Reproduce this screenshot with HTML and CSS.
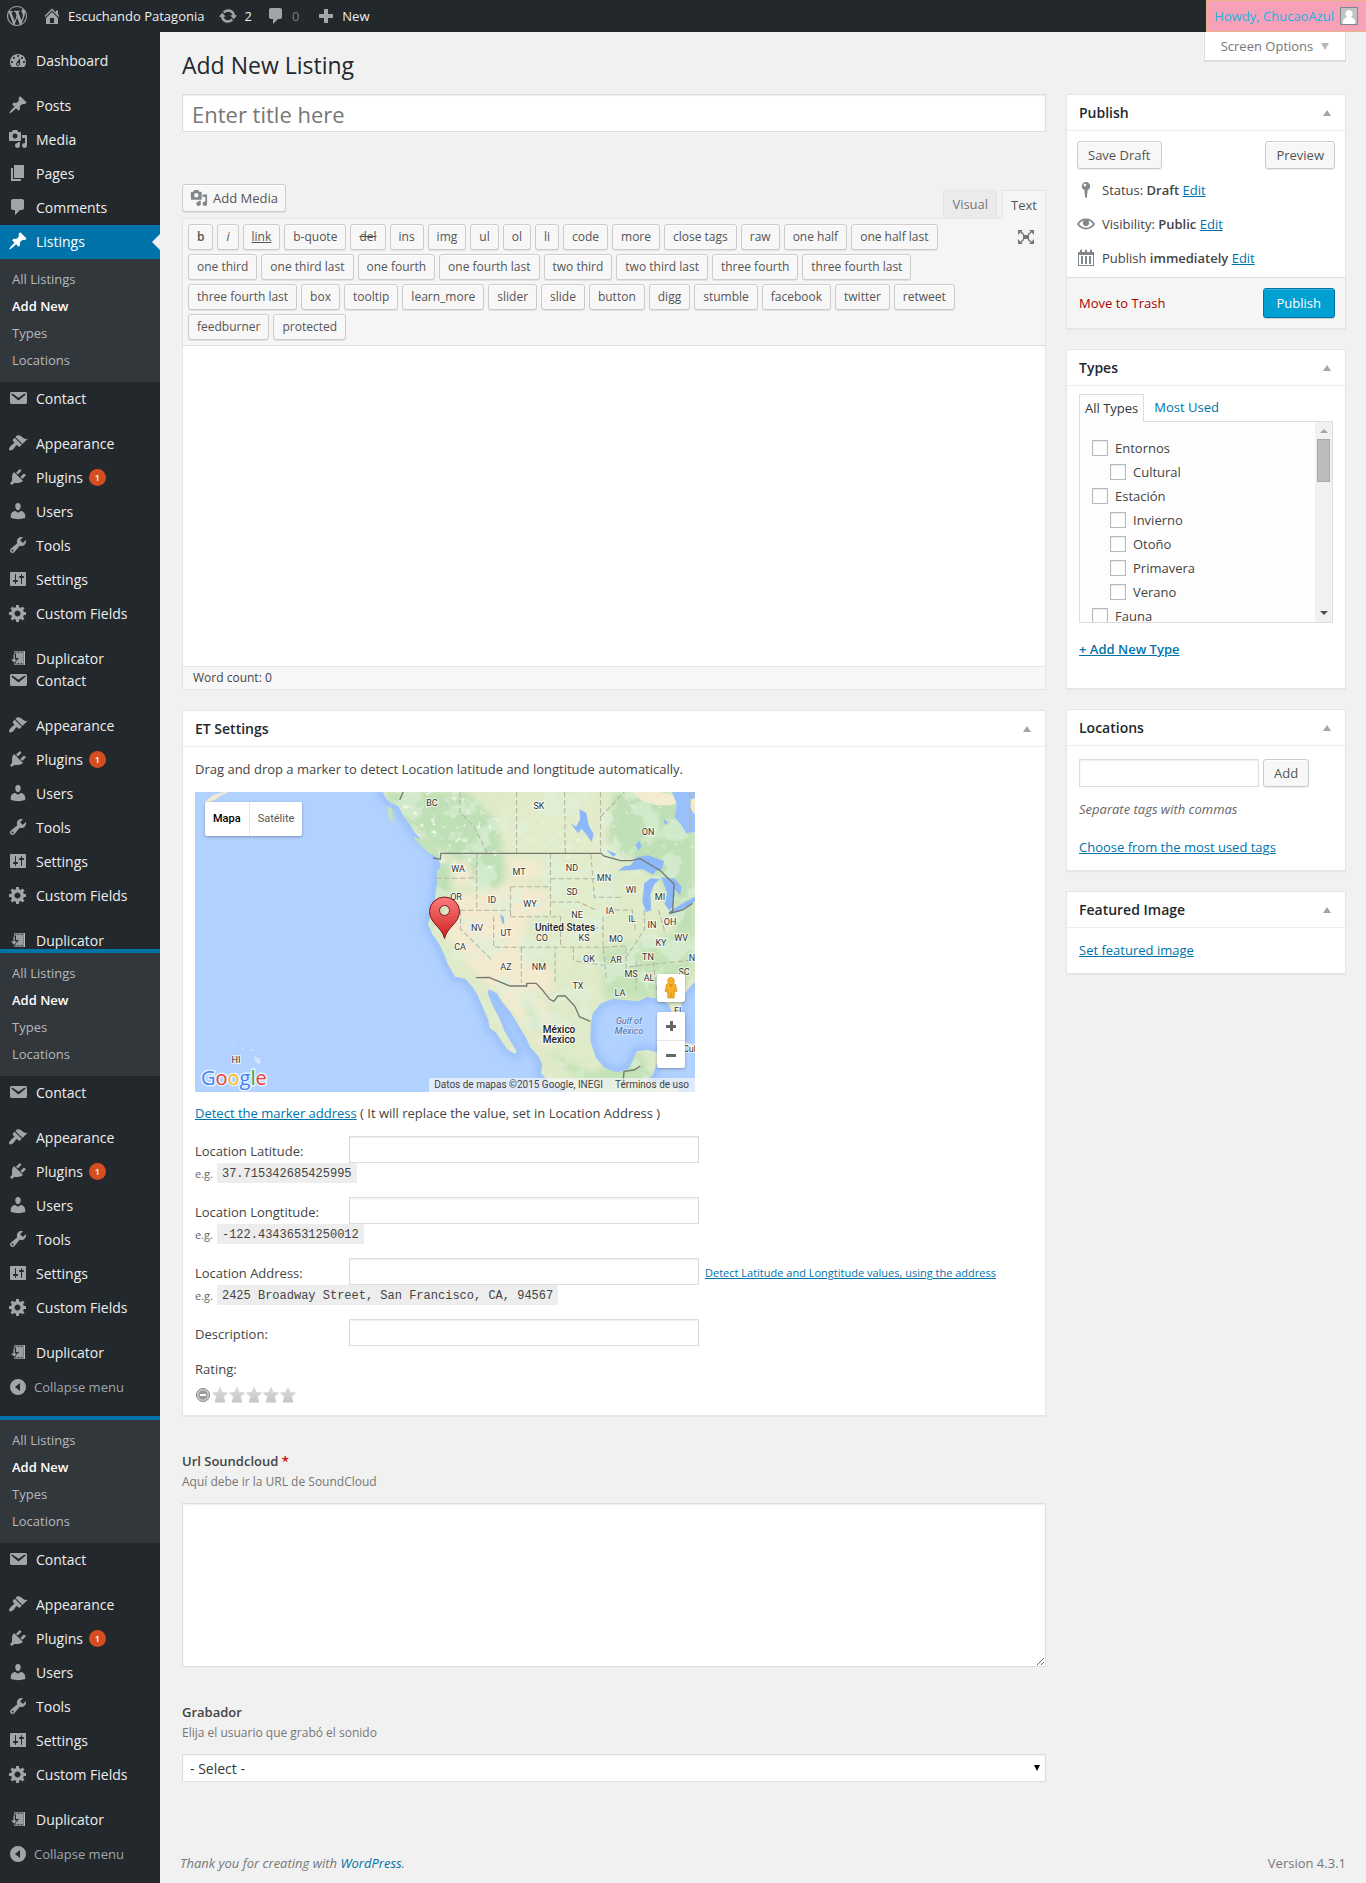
FILE: index.html
```html
<!DOCTYPE html>
<html lang="es">
<head>
<meta charset="utf-8">
<meta name="viewport" content="width=device-width, initial-scale=1">
<title>Add New Listing</title>
<link rel="stylesheet" href="styles.css">
</head>
<body>
<svg class="sprite" width="0" height="0" aria-hidden="true">
<symbol id="i-wp" viewBox="0 0 20 20"><path d="M20 10c0-5.51-4.49-10-10-10C4.48 0 0 4.49 0 10c0 5.52 4.48 10 10 10 5.51 0 10-4.48 10-10zM7.78 15.37L4.37 6.22c.55-.02 1.17-.08 1.17-.08.5-.06.44-1.13-.06-1.11 0 0-1.45.11-2.37.11-.18 0-.37 0-.58-.01C4.12 2.69 6.87 1.11 10 1.11c2.33 0 4.45.87 6.05 2.34-.68-.11-1.65.39-1.65 1.58 0 .74.45 1.36.9 2.1.35.61.55 1.36.55 2.46 0 1.49-1.4 5-1.4 5l-3.03-8.37c.54-.02.82-.17.82-.17.5-.05.44-1.25-.06-1.22 0 0-1.44.12-2.38.12-.87 0-2.33-.12-2.33-.12-.5-.03-.56 1.2-.06 1.22l.92.08 1.26 3.41zM17.41 10c.24-.64.74-1.87.43-4.25.7 1.29 1.05 2.71 1.05 4.25 0 3.29-1.73 6.24-4.4 7.78.97-2.59 1.94-5.2 2.92-7.78zM6.1 18.09C3.12 16.65 1.11 13.53 1.11 10c0-1.3.23-2.48.72-3.59C3.25 10.3 4.67 14.2 6.1 18.09zm4.03-6.63l2.58 6.98c-.86.29-1.76.45-2.71.45-.79 0-1.57-.11-2.29-.33.81-2.38 1.62-4.74 2.42-7.1z"/></symbol>
<symbol id="i-home" viewBox="0 0 20 20"><path d="M16 8.5l1.53 1.53-1.06 1.06L10 4.6l-6.47 6.49-1.06-1.06L10 2.5l4 4v-2h2v4zm-6-2.46l6 5.99V18H4v-5.97zM12 17v-5H8v5h4z"/></symbol>
<symbol id="i-update" viewBox="0 0 20 20"><path d="M10.2 3.28c3.53 0 6.43 2.61 6.92 6h2.08l-3.5 4-3.5-4h2.32c-.45-1.97-2.21-3.45-4.32-3.45-1.45 0-2.73.71-3.54 1.78L4.95 5.66C6.23 4.2 8.11 3.28 10.2 3.28zm-.4 13.44c-3.52 0-6.43-2.61-6.92-6H.8l3.5-4c1.17 1.33 2.33 2.67 3.5 4H5.48c.45 1.97 2.21 3.45 4.32 3.45 1.45 0 2.73-.71 3.54-1.78l1.71 1.95c-1.28 1.46-3.15 2.38-5.25 2.38z"/></symbol>
<symbol id="i-plus" viewBox="0 0 20 20"><path d="M8 3h4v5h5v4h-5v5H8v-5H3V8h5z"/></symbol>
<symbol id="i-dash" viewBox="0 0 20 20"><path fill-rule="evenodd" d="M3.76 17h12.48c1.1-1.37 1.76-3.11 1.76-5 0-4.42-3.58-8-8-8s-8 3.58-8 8c0 1.89.66 3.63 1.76 5zM10 5c.55 0 1 .45 1 1s-.45 1-1 1-1-.45-1-1 .45-1 1-1zM6 7c.55 0 1 .45 1 1s-.45 1-1 1-1-.45-1-1 .45-1 1-1zm8 0c.55 0 1 .45 1 1s-.45 1-1 1-1-.45-1-1 .45-1 1-1zm-5.37 5.55L12 8v6c0 1.1-.9 2-2 2s-2-.9-2-2c0-.57.24-1.08.63-1.45zM4 11c.55 0 1 .45 1 1s-.45 1-1 1-1-.45-1-1 .45-1 1-1zm12 0c.55 0 1 .45 1 1s-.45 1-1 1-1-.45-1-1 .45-1 1-1zm-5 3c0-.55-.45-1-1-1s-1 .45-1 1 .45 1 1 1 1-.45 1-1z"/></symbol>
<symbol id="i-pin" viewBox="0 0 20 20"><path d="M10.44 3.02l1.82-1.82 6.36 6.35-1.83 1.82c-1.05-.68-2.48-.57-3.41.36l-.75.75c-.92.93-1.04 2.35-.35 3.41l-1.83 1.82-2.41-2.41-2.8 2.79c-.42.42-3.38 2.71-3.8 2.29s1.86-3.39 2.28-3.81l2.79-2.79L4.1 9.36l1.83-1.82c1.05.69 2.48.57 3.4-.36l.75-.75c.93-.92 1.05-2.35.36-3.41z"/></symbol>
<symbol id="i-media" viewBox="0 0 20 20"><path fill-rule="evenodd" d="M13 11V4c0-.55-.45-1-1-1h-1.67L9 1H5L3.67 3H2c-.55 0-1 .45-1 1v7c0 .55.45 1 1 1h10c.55 0 1-.45 1-1zM7 4.5c1.38 0 2.5 1.12 2.5 2.5S8.38 9.5 7 9.5 4.5 8.38 4.5 7 5.62 4.5 7 4.5zM14 6h5v10.5c0 1.38-1.12 2.5-2.5 2.5S14 17.88 14 16.5s1.12-2.5 2.5-2.5c.17 0 .34.02.5.05V9h-3V6zm-4 8.05V13h2v3.5c0 1.38-1.12 2.5-2.5 2.5S7 17.88 7 16.5 8.12 14 9.5 14c.17 0 .34.02.5.05z"/></symbol>
<symbol id="i-page" viewBox="0 0 20 20"><path d="M6 15V2h10v13H6zm-1 1h8v2H3V5h2v11z"/></symbol>
<symbol id="i-comment" viewBox="0 0 20 20"><path d="M5 2h9c1.1 0 2 .9 2 2v7c0 1.1-.9 2-2 2h-2l-5 5v-5H5c-1.1 0-2-.9-2-2V4c0-1.1.9-2 2-2z"/></symbol>
<symbol id="i-mail" viewBox="0 0 20 20"><path fill-rule="evenodd" d="M3.87 4h13.25C18.37 4 19 4.59 19 5.79v8.42c0 1.19-.63 1.79-1.88 1.79H3.87c-1.25 0-1.88-.6-1.88-1.79V5.79c0-1.2.63-1.79 1.88-1.79zm6.62 8.6l6.74-5.53c.24-.2.43-.66.13-1.07-.29-.41-.82-.42-1.17-.17l-5.7 3.86L4.8 5.83c-.35-.25-.88-.24-1.17.17-.3.41-.11.87.13 1.07z"/></symbol>
<symbol id="i-brush" viewBox="0 0 20 20"><path d="M14.48 11.06L7.41 3.99l1.5-1.5c.5-.56 2.3-.47 3.51.32 1.21.8 1.43 1.28 2.91 2.1 1.18.64 2.45 1.26 4.45.85zm-.71.71L6.7 4.7 4.93 6.47c-.39.39-.39 1.02 0 1.41l1.06 1.06c.39.39.39 1.03 0 1.42-.6.6-1.43 1.11-2.21 1.69-.35.26-.7.53-1.01.84C1.43 14.23.4 16.08 1.4 17.07c.99 1 2.84-.03 4.18-1.36.31-.31.58-.66.85-1.02.57-.78 1.08-1.61 1.69-2.21.39-.39 1.02-.39 1.41 0l1.06 1.06c.39.39 1.02.39 1.41 0z"/></symbol>
<symbol id="i-plug" viewBox="0 0 20 20"><path d="M13.11 4.36L9.87 7.6 8 5.73l3.24-3.24c.35-.34 1.05-.2 1.56.32.52.51.66 1.21.31 1.55zm-8 1.77l.91-1.12 9.01 9.01-1.19.84c-.71.71-2.63 1.16-3.82 1.16H6.14L4.9 17.26c-.59.59-1.54.59-2.12 0-.59-.58-.59-1.53 0-2.12l1.24-1.24v-3.88c0-1.13.4-3.19 1.09-3.89zm7.26 3.97l3.24-3.24c.34-.35 1.04-.21 1.55.31.52.51.66 1.21.31 1.55l-3.24 3.25z"/></symbol>
<symbol id="i-user" viewBox="0 0 20 20"><path d="M10 9.25c-2.27 0-2.73-3.44-2.73-3.44C7 4.02 7.82 2 9.97 2c2.16 0 2.98 2.02 2.71 3.81 0 0-.41 3.44-2.68 3.44zm0 2.57L12.72 10c2.39 0 4.52 2.33 4.52 4.53v2.49s-3.65 1.13-7.24 1.13c-3.65 0-7.24-1.13-7.24-1.13v-2.49c0-2.25 1.94-4.48 4.47-4.48z"/></symbol>
<symbol id="i-tool" viewBox="0 0 20 20"><path fill-rule="evenodd" d="M16.68 9.77c-1.34 1.34-3.3 1.67-4.95.99l-5.41 6.52c-.99.99-2.59.99-3.58 0s-.99-2.59 0-3.57l6.52-5.42c-.68-1.65-.35-3.61.99-4.95 1.28-1.28 3.12-1.62 4.72-1.06l-2.89 2.89 2.82 2.82 2.86-2.87c.53 1.58.18 3.39-1.08 4.65zM3.81 16.21c.4.39 1.04.39 1.43 0 .4-.4.4-1.04 0-1.43-.39-.4-1.03-.4-1.43 0-.39.39-.39 1.03 0 1.43z"/></symbol>
<symbol id="i-set" viewBox="0 0 20 20"><path fill-rule="evenodd" d="M18 16V4c0-.55-.45-1-1-1H3c-.55 0-1 .45-1 1v12c0 .55.45 1 1 1h14c.55 0 1-.45 1-1zM8 11h1c.55 0 1 .45 1 1s-.45 1-1 1H8v1.500c0 .28-.22.5-.5.5s-.5-.22-.5-.5V13H6c-.55 0-1-.45-1-1s.45-1 1-1h1V5.500c0-.28.22-.5.5-.5s.5.22.5.5V11zm5-2h-1c-.55 0-1-.45-1-1s.45-1 1-1h1V5.500c0-.28.22-.5.5-.5s.5.22.5.5V7h1c.55 0 1 .45 1 1s-.45 1-1 1h-1v5.500c0 .28-.22.5-.5.5s-.5-.22-.5-.5V9z"/></symbol>
<symbol id="i-gear" viewBox="0 0 20 20"><path fill-rule="evenodd" d="M18 12h-2.180c-.17.7-.44 1.350-.81 1.930l1.540 1.540-2.100 2.100-1.540-1.540c-.58.36-1.230.63-1.910.79V19H8v-2.180c-.68-.16-1.330-.43-1.910-.79l-1.540 1.540-2.120-2.120 1.540-1.540c-.36-.58-.63-1.230-.79-1.910H1V9.030h2.170c.16-.7.44-1.350.8-1.940L2.430 5.550l2.100-2.100 1.540 1.540c.58-.37 1.240-.64 1.930-.81V2h3v2.180c.68.16 1.330.43 1.910.79l1.540-1.540 2.120 2.120-1.540 1.540c.36.59.64 1.240.8 1.940H18V12zm-8.500 1.500c1.660 0 3-1.340 3-3s-1.340-3-3-3-3 1.340-3 3 1.340 3 3 3z"/></symbol>
<symbol id="i-dup" viewBox="0 0 20 20"><path fill="#7d7f81" d="M6 3h11v14H6z"/><path fill="#9a9c9e" d="M8 5h7v10H8z"/><path fill="none" stroke="#3a3c3e" stroke-dasharray="1 2" d="M7 4.500h9M7 15.500h9"/><path fill="none" stroke="#b5b7b9" d="M16.500 3v14"/><path fill="#23282d" d="M4 6h4v4h3l-4.500 5L2 11h2z"/><path fill="#a8abae" d="M5.500 6.500h1.300v5h2L6 14.500l-3-3h2.500z"/></symbol>
<symbol id="i-collapse" viewBox="0 0 20 20"><path fill-rule="evenodd" d="M10 2a8 8 0 1 0 0 16 8 8 0 0 0 0-16zm2 4v8l-5-4z"/></symbol>
<symbol id="i-eye" viewBox="0 0 20 20"><path fill-rule="evenodd" d="M19.700 9.400C17.700 6 14 3.900 10 3.900S2.300 6 .3 9.400L0 10l.3.6c2 3.400 5.700 5.500 9.700 5.500s7.700-2.100 9.700-5.500l.3-.6-.3-.6zM10 14.100c-3.100 0-6-1.600-7.700-4.100C3.600 8 5.700 6.600 8 6.100c-.9.6-1.500 1.700-1.500 2.900 0 1.900 1.600 3.500 3.500 3.500s3.500-1.600 3.500-3.500c0-1.200-.6-2.300-1.500-2.900 2.300.5 4.400 1.900 5.700 3.900-1.700 2.500-4.600 4.100-7.700 4.100z"/></symbol>
<symbol id="i-status" viewBox="0 0 20 20"><path fill-rule="evenodd" d="M10 1a4.700 4.700 0 0 0-1.800 9L9 18l1 1 1-1 .8-8A4.700 4.700 0 0 0 10 1zm-1.200 2a1.500 1.500 0 1 1 0 3 1.500 1.500 0 0 1 0-3z"/></symbol>
<symbol id="i-cal" viewBox="0 0 18 18"><path fill-rule="evenodd" d="M1 3h2V1.500a1 1 0 0 1 2 0V3h3V1.500a1 1 0 0 1 2 0V3h3V1.500a1 1 0 0 1 2 0V3h2v14H1zm1 3v10h14V6zM4 7h2v8H4zm4 0h2v8H8zm4 0h2v8h-2z"/></symbol>
<symbol id="i-full" viewBox="0 0 20 20"><path d="M7 8h6v4H7zM2 3h5L5.400 4.600l3 2.600-1 1-3-2.600L2 8zM18 3v5l-2.400-2.400-3 2.600-1-1 3-2.600L13 3zM2 17v-5l2.400 2.400 3-2.600 1 1-3 2.600L7 17zM18 17h-5l1.600-1.600-3-2.600 1-1 3 2.600L18 12z"/></symbol>
<linearGradient id="starfill" x1="0" y1="0" x2="0" y2="1"><stop offset="0" stop-color="#dcdcdc"/><stop offset="1" stop-color="#c4c4c4"/></linearGradient>
<symbol id="i-star" viewBox="0 0 16 16"><path fill="url(#starfill)" stroke="#d6d6d6" d="M8 .6l2.200 4.900 5.300.5-4 3.600 1.500 5.600H3l1.500-5.600-4-3.600 5.300-.5z"/></symbol>
</svg>

<header class="adminbar">
  <a href="#" class="ab ab-logo" aria-label="WordPress"><svg class="ic"><use href="#i-wp"/></svg></a>
  <a href="#" class="ab ab-site"><svg class="ic"><use href="#i-home"/></svg>Escuchando Patagonia</a>
  <a href="#" class="ab ab-upd"><svg class="ic"><use href="#i-update"/></svg>2</a>
  <a href="#" class="ab ab-com"><svg class="ic"><use href="#i-comment"/></svg><span class="dim">0</span></a>
  <a href="#" class="ab ab-new"><svg class="ic"><use href="#i-plus"/></svg>New</a>
  <a href="#" class="howdy">Howdy, ChucaoAzul<svg class="avatar" viewBox="0 0 18 18" aria-hidden="true"><rect x=".5" y=".5" width="17" height="17" fill="#c3c3c3" stroke="#82878c"/><path fill="#fff" d="M9 3a3.700 3.700 0 0 1 2.200 6.600c.5 1.400 3.300 1.600 3.800 4.400v3H3v-3c.5-2.800 3.300-3 3.800-4.400A3.700 3.700 0 0 1 9 3z"/></svg></a>
</header>

<div class="layout">
<nav class="sidebar" aria-label="Main menu">
  <ul class="menu first">
    <li><a href="#"><svg class="ic"><use href="#i-dash"/></svg>Dashboard</a></li>
    <li class="gap"><a href="#"><svg class="ic"><use href="#i-pin"/></svg>Posts</a></li>
    <li><a href="#"><svg class="ic"><use href="#i-media"/></svg>Media</a></li>
    <li><a href="#"><svg class="ic"><use href="#i-page"/></svg>Pages</a></li>
    <li><a href="#"><svg class="ic"><use href="#i-comment"/></svg>Comments</a></li>
    <li class="current"><a href="#"><svg class="ic"><use href="#i-pin"/></svg>Listings</a></li>
  </ul>
  <ul class="submenu">
    <li><a href="#">All Listings</a></li><li><a href="#" class="on">Add New</a></li><li><a href="#">Types</a></li><li><a href="#">Locations</a></li>
  </ul>
  <ul class="menu">
    <li><a href="#"><svg class="ic"><use href="#i-mail"/></svg>Contact</a></li>
    <li class="gap"><a href="#"><svg class="ic"><use href="#i-brush"/></svg>Appearance</a></li>
    <li><a href="#"><svg class="ic"><use href="#i-plug"/></svg>Plugins<span class="badge">1</span></a></li>
    <li><a href="#"><svg class="ic"><use href="#i-user"/></svg>Users</a></li>
    <li><a href="#"><svg class="ic"><use href="#i-tool"/></svg>Tools</a></li>
    <li><a href="#"><svg class="ic"><use href="#i-set"/></svg>Settings</a></li>
    <li><a href="#"><svg class="ic"><use href="#i-gear"/></svg>Custom Fields</a></li>
    <li class="gap short"><a href="#"><svg class="ic"><use href="#i-dup"/></svg>Duplicator</a></li>
  </ul>
  <ul class="menu">
    <li><a href="#"><svg class="ic"><use href="#i-mail"/></svg>Contact</a></li>
    <li class="gap"><a href="#"><svg class="ic"><use href="#i-brush"/></svg>Appearance</a></li>
    <li><a href="#"><svg class="ic"><use href="#i-plug"/></svg>Plugins<span class="badge">1</span></a></li>
    <li><a href="#"><svg class="ic"><use href="#i-user"/></svg>Users</a></li>
    <li><a href="#"><svg class="ic"><use href="#i-tool"/></svg>Tools</a></li>
    <li><a href="#"><svg class="ic"><use href="#i-set"/></svg>Settings</a></li>
    <li><a href="#"><svg class="ic"><use href="#i-gear"/></svg>Custom Fields</a></li>
    <li class="gap short clipped"><a href="#"><svg class="ic"><use href="#i-dup"/></svg>Duplicator</a></li>
  </ul>
  <ul class="submenu ruled">
    <li><a href="#">All Listings</a></li><li><a href="#" class="on">Add New</a></li><li><a href="#">Types</a></li><li><a href="#">Locations</a></li>
  </ul>
  <ul class="menu last">
    <li><a href="#"><svg class="ic"><use href="#i-mail"/></svg>Contact</a></li>
    <li class="gap"><a href="#"><svg class="ic"><use href="#i-brush"/></svg>Appearance</a></li>
    <li><a href="#"><svg class="ic"><use href="#i-plug"/></svg>Plugins<span class="badge">1</span></a></li>
    <li><a href="#"><svg class="ic"><use href="#i-user"/></svg>Users</a></li>
    <li><a href="#"><svg class="ic"><use href="#i-tool"/></svg>Tools</a></li>
    <li><a href="#"><svg class="ic"><use href="#i-set"/></svg>Settings</a></li>
    <li><a href="#"><svg class="ic"><use href="#i-gear"/></svg>Custom Fields</a></li>
    <li class="gap"><a href="#"><svg class="ic"><use href="#i-dup"/></svg>Duplicator</a></li>
    <li><button type="button" class="collapse"><svg class="ic"><use href="#i-collapse"/></svg>Collapse menu</button></li>
  </ul>
  <ul class="submenu ruled">
    <li><a href="#">All Listings</a></li><li><a href="#" class="on">Add New</a></li><li><a href="#">Types</a></li><li><a href="#">Locations</a></li>
  </ul>
  <ul class="menu last">
    <li><a href="#"><svg class="ic"><use href="#i-mail"/></svg>Contact</a></li>
    <li class="gap"><a href="#"><svg class="ic"><use href="#i-brush"/></svg>Appearance</a></li>
    <li><a href="#"><svg class="ic"><use href="#i-plug"/></svg>Plugins<span class="badge">1</span></a></li>
    <li><a href="#"><svg class="ic"><use href="#i-user"/></svg>Users</a></li>
    <li><a href="#"><svg class="ic"><use href="#i-tool"/></svg>Tools</a></li>
    <li><a href="#"><svg class="ic"><use href="#i-set"/></svg>Settings</a></li>
    <li><a href="#"><svg class="ic"><use href="#i-gear"/></svg>Custom Fields</a></li>
    <li class="gap"><a href="#"><svg class="ic"><use href="#i-dup"/></svg>Duplicator</a></li>
    <li><button type="button" class="collapse"><svg class="ic"><use href="#i-collapse"/></svg>Collapse menu</button></li>
  </ul>
</nav>

<main class="content">
  <div class="head">
    <h1>Add New Listing</h1>
    <button type="button" class="screen-options">Screen Options<span class="tri down"></span></button>
  </div>
  <div class="columns">
  <div class="primary">
    <input class="title-input" type="text" placeholder="Enter title here" aria-label="Title">
    <div class="editor-tools">
      <button type="button" class="btn media"><svg class="ic"><use href="#i-media"/></svg>Add Media</button>
      <div class="editor-tabs"><button type="button" class="etab">Visual</button><button type="button" class="etab active">Text</button></div>
    </div>
    <div class="editor">
      <div class="toolbar">
        <div class="quicktags">
          <button type="button" class="tag b">b</button><button type="button" class="tag i">i</button><button type="button" class="tag u">link</button><button type="button" class="tag">b-quote</button><button type="button" class="tag s">del</button><button type="button" class="tag">ins</button><button type="button" class="tag">img</button><button type="button" class="tag">ul</button><button type="button" class="tag">ol</button><button type="button" class="tag">li</button><button type="button" class="tag">code</button><button type="button" class="tag">more</button><button type="button" class="tag">close tags</button><button type="button" class="tag">raw</button><button type="button" class="tag">one half</button><button type="button" class="tag">one half last</button><button type="button" class="tag">one third</button><button type="button" class="tag">one third last</button><button type="button" class="tag">one fourth</button><button type="button" class="tag">one fourth last</button><button type="button" class="tag">two third</button><button type="button" class="tag">two third last</button><button type="button" class="tag">three fourth</button><button type="button" class="tag">three fourth last</button><button type="button" class="tag">three fourth last</button><button type="button" class="tag">box</button><button type="button" class="tag">tooltip</button><button type="button" class="tag">learn_more</button><button type="button" class="tag">slider</button><button type="button" class="tag">slide</button><button type="button" class="tag">button</button><button type="button" class="tag">digg</button><button type="button" class="tag">stumble</button><button type="button" class="tag">facebook</button><button type="button" class="tag">twitter</button><button type="button" class="tag">retweet</button><button type="button" class="tag">feedburner</button><button type="button" class="tag">protected</button>
        </div>
        <button type="button" class="fullscreen" aria-label="Fullscreen"><svg class="ic"><use href="#i-full"/></svg></button>
      </div>
      <textarea class="editor-area" aria-label="Content"></textarea>
      <div class="editor-status">Word count: 0</div>
    </div>

    <section class="box et">
      <h2 class="box-title">ET Settings<span class="tri up"></span></h2>
      <div class="et-body">
        <p>Drag and drop a marker to detect Location latitude and longtitude automatically.</p>
        <div class="map">
          <svg class="map-art" viewBox="0 0 500 300" role="img" aria-label="Map of North America">
            <defs>
              <clipPath id="landclip"><path id="land" d="M600 426l10 20 14 12 22 10 14 28 18 24 14 24 22 24 26 20 18 24 10 24 4 14-12 14 2 28-6 42-4 40-10 20-8 30 14 30 20 30 14 30 10 28 22 38 30 6 22 26 14 22 18 42 14 34 4 24 20 14 18 30 16 22 22 12 4-8-18-30-18-30-16-40-20-40-14-36 4-10 24 12 14 24 26 32 20 34 24 40 16 34 24 26 10 26-4 24 24 26 34 18 34 18 36 10 48 0h240l-10-26-50-12-40-14 16-18 10-30 10-32-34-10-34 4-10 24-14 30-36 10-36-14-26-32-16-50 2-54 6-30 24-28 36-14 40 4 34 4 26-14 36 6 30 18 12 40 18 50 12 12 4-24-14-50 6-46 18-30 24-24V426z"/></clipPath>
              <filter id="rough" x="0" y="0" width="1" height="1"><feTurbulence type="fractalNoise" baseFrequency=".014" numOctaves="4" seed="8"/><feColorMatrix values="0 0 0 0 .74  0 0 0 0 .88  0 0 0 0 .71  9 0 0 0 -4.700"/></filter>
              <filter id="specks" x="0" y="0" width="1" height="1"><feTurbulence type="fractalNoise" baseFrequency=".05" numOctaves="3" seed="3"/><feColorMatrix values="0 0 0 0 .92  0 0 0 0 .93  0 0 0 0 .88  0 10 0 0 -6.600"/></filter>
              <filter id="soft" x="-.2" y="-.2" width="1.400" height="1.400"><feGaussianBlur stdDeviation="9"/></filter>
              <linearGradient id="pinfill" x1="0" y1="0" x2="0" y2="1"><stop offset="0" stop-color="#ff7a7a"/><stop offset="1" stop-color="#cc2222"/></linearGradient>
            </defs>
            <svg x="0" y="0" width="500" height="300" viewBox="44 426 1480 900" preserveAspectRatio="none">
              <rect x="44" y="426" width="1480" height="900" fill="#b1d1ff"/>
              <use href="#land" fill="none" stroke="#9dc3fb" stroke-width="34" filter="url(#soft)"/>
              <path fill="#f1ecd0" d="M74 456l22-20 34-10h14l-22 10-20 14-24 10z"/>
              <use href="#land" fill="#dfeac8"/>
              <g clip-path="url(#landclip)">
                <g filter="url(#soft)">
                  <path fill="#bfe0b6" d="M600 426h250l90 90 20 130-10 80-70-30-60-70-80-40-90-90z"/>
                  <path fill="#bfe0b6" d="M1280 426h244v460l-40 10-60-200-150-110-60-100zM750 640h50v200h-50z"/>
                  <path fill="#f3eacf" d="M800 740l80-10 100-30 110 20 40 60-100 20-20 110 90 60 0 60-100-20-100-10-80-100-50-70zM890 985l110 20 80 60 40 120-50 0-80-90-80-100zM800 650l50-20 20 60-50 20zM960 620l130 20v40l-100 10z"/>
                  <path fill="#e2eccb" d="M940 460l200-34 140 0-20 180 20 130-60 150-110 90-20-240-20-100-110-20z"/>
                  <path fill="#c6e3b8" d="M1240 900l280-60v120l-60 90-200 0z"/>
                  <path fill="#c3e2b6" d="M1080 1200l140 70 140-70 60 120h-200zM1010 1030l40 50 30 80-40-30z"/>
                </g>
                <rect x="44" y="426" width="1480" height="900" filter="url(#rough)" opacity=".6"/>
                <path filter="url(#specks)" opacity=".8" d="M620 426h320v180l-60 60-240-200z"/>
                <rect x="940" y="426" width="584" height="200" filter="url(#specks)" opacity=".4"/>
              </g>
              <path fill="#c3e2b8" d="M612 468l16 8 2 28 8 18-18-16zM690 562l40 8 30 30 10 24-30-12-30-28z"/>
              <path fill="#f3ecd2" d="M1340 426h80l36 8 30 20-34 12-40 0-46-14z"/>
              <path fill="#9ac0fb" d="M1456 426h68v120l-26 4-14-24-20-24 6-40z"/>
              <path fill="#8cb8fa" d="M1182 478l20 10 8 40 14 24-6 24-14-20-16-20-10 14-22-30 16 10 12-22zM1296 662l20-14 18-2 16-24 36-6 46 18-6 24-20 6-6 10-30-16-30 2zM1374 700l20-16 26 4-16 14-12 30 2 48-14 6-12-30zM1424 682l40 4 20 24-4 26-16-18-4 50-12 14-14-20 8-34zM1446 786l24-16 54-30v14l-50 32-26 8zM1348 584l10-12 8 16-10 14zM1262 600l30 12-10 8zM948 792l10 10 2 22-8-8zM1430 505l14 12-8 8z"/>
              <path fill="#f1ead0" d="M1508 450l16-6v50l-12-16z"/>
              <g fill="none" stroke="#b0b2a4" stroke-width="3" stroke-dasharray="16 8"><path d="M828 426v60l40 40 40 80M996 426v182M1138 426l2 182M1244 426v180M1245 500l70-74M757 685h60l60-2M878 612v168M828 781h150M978 710v90M978 710h118M1096 612v188M928 800v92h80M978 800h148v92M830 781v56l90 90M1008 892h250M1010 892v106M1096 686h132M1096 756h84l50 24M1126 834h126M1216 612l10 130h84M1110 996v-100M1164 892v40l90 14M1252 800v90l10 100M1262 780h76l10 60M1254 892l66-4v100M1374 780v60l-60 90M1416 780l20 70M1330 950l190-20M1350 935v84M1400 935l10 86M1510 426v120"/></g>
              <g fill="none" stroke="#76786f" stroke-width="4"><path d="M660 426l-10 24M748 624l22 4 2-18h474l8 8 50 14h30l28-6 60 36 40 40-4 80-10 8 40-10 28-20M876 983l38-1 62 26h50v-8h28l20 22 20 26 12 6 12-16h22l28 30 14 32 32 14M1310 1310l4-46 30-4 18-12"/></g>
              <path fill="#d3e4fc" d="M220 1218l16 8 4 12-10 4-10-12zM156 1184l8 4-6 2zM184 1192l8 6-8 0zM208 1196l10 4-8 4z"/>
              <path fill="#f0ecd2" d="M1480 1172l44 14v14l-30-10z"/>
            </svg>
            <g class="st"><text x="237" y="14">BC</text><text x="344" y="17">SK</text><text x="453" y="43">ON</text><text x="263" y="80">WA</text><text x="324" y="83">MT</text><text x="377" y="79">ND</text><text x="409" y="89">MN</text><text x="436" y="101">WI</text><text x="465" y="108">MI</text><text x="261" y="108">OR</text><text x="297" y="111">ID</text><text x="335" y="115">WY</text><text x="377" y="103">SD</text><text x="382" y="126">NE</text><text x="415" y="122">IA</text><text x="437" y="130">IL</text><text x="457" y="136">IN</text><text x="475" y="133">OH</text><text x="282" y="139">NV</text><text x="311" y="144">UT</text><text x="347" y="149">CO</text><text x="389" y="149">KS</text><text x="421" y="150">MO</text><text x="466" y="154">KY</text><text x="486" y="149">WV</text><text x="265" y="158">CA</text><text x="311" y="178">AZ</text><text x="344" y="178">NM</text><text x="394" y="170">OK</text><text x="421" y="171">AR</text><text x="453" y="168">TN</text><text x="500" y="169">NC</text><text x="489" y="183">SC</text><text x="436" y="185">MS</text><text x="454" y="189">AL</text><text x="383" y="197">TX</text><text x="425" y="204">LA</text><text x="484" y="222">FL</text><text x="41" y="271">HI</text></g>
            <g class="country"><text x="370" y="139">United States</text><text x="364" y="241">México</text><text x="364" y="251">Mexico</text></g>
            <g class="gulf"><text x="434" y="232">Gulf of</text><text x="434" y="242">Mexico</text></g>
            <text class="cuba" x="488" y="260">Cuba</text>
            <path fill="url(#pinfill)" stroke="#7c1616" fill-rule="evenodd" d="M249.500 146.500C247 135 234.500 131 234.500 119.500a15 14.500 0 0 1 30 0c0 11.500-12.500 15.500-15 27zm0-33a5 5 0 1 0 0 10 5 5 0 0 0 0-10z"/>
            <text class="glogo" x="6" y="293"><tspan fill="#4285f4">G</tspan><tspan fill="#ea4335">o</tspan><tspan fill="#fbbc05">o</tspan><tspan fill="#4285f4">g</tspan><tspan fill="#34a853">l</tspan><tspan fill="#ea4335">e</tspan></text>
          </svg>
          <div class="map-type"><button type="button" class="on">Mapa</button><button type="button">Satélite</button></div>
          <div class="map-controls">
            <button type="button" class="pegman" aria-label="Street View"><svg viewBox="0 0 14 22" width="14" height="22"><path fill="#f5b027" stroke="#d08c12" stroke-width=".7" d="M7 .5a3.300 3.300 0 0 1 2.200 5.800l2.300.9 1.500 7-1.500.6-.8-1.400-.6 7.600H7.400L7 16l-.4 5H3.900l-.6-7.600-.8 1.400-1.500-.6 1.500-7 2.300-.9A3.300 3.300 0 0 1 7 .5z"/><path fill="#d08c12" d="M4.800 7.500h4.400L7 10z"/></svg></button>
            <div class="zoomer"><button type="button" aria-label="Zoom in"><svg viewBox="0 0 10 10" width="10" height="10"><path fill="#666" d="M4 0h3v4h3v3H7v3H4V7H0V4h4z"/></svg></button><button type="button" aria-label="Zoom out"><svg viewBox="0 0 10 10" width="10" height="10"><path fill="#666" d="M0 4h10v3H0z"/></svg></button></div>
          </div>
          <div class="map-legal"><span>Datos de mapas ©2015 Google, INEGI</span><a href="#">Términos de uso</a></div>
        </div>
        <p><a href="#">Detect the marker address</a> ( It will replace the value, set in Location Address )</p>
        <div class="fields">
          <div class="field"><div class="field-row"><label for="lat">Location Latitude:</label><input id="lat" type="text"></div><div class="hint">e.g. <code>37.715342685425995</code></div></div>
          <div class="field"><div class="field-row"><label for="lng">Location Longtitude:</label><input id="lng" type="text"></div><div class="hint">e.g. <code>-122.43436531250012</code></div></div>
          <div class="field"><div class="field-row"><label for="adr">Location Address:</label><input id="adr" type="text"><a href="#">Detect Latitude and Longtitude values, using the address</a></div><div class="hint">e.g. <code>2425 Broadway Street, San Francisco, CA, 94567</code></div></div>
          <div class="field"><div class="field-row"><label for="dsc">Description:</label><input id="dsc" type="text"></div></div>
        </div>
        <p class="rating-label">Rating:</p>
        <div class="rating">
          <button type="button" aria-label="Cancel rating"><svg viewBox="0 0 16 16"><circle cx="8" cy="8" r="6.500" fill="#ccc" stroke="#888"/><circle cx="8" cy="8" r="4.500" fill="#999"/><path fill="#fff" d="M5 7h6v2H5z"/></svg></button>
          <button type="button" aria-label="1 star"><svg><use href="#i-star"/></svg></button><button type="button" aria-label="2 stars"><svg><use href="#i-star"/></svg></button><button type="button" aria-label="3 stars"><svg><use href="#i-star"/></svg></button><button type="button" aria-label="4 stars"><svg><use href="#i-star"/></svg></button><button type="button" aria-label="5 stars"><svg><use href="#i-star"/></svg></button>
        </div>
      </div>
    </section>

    <div class="acf">
      <label for="sc">Url Soundcloud <span class="req">*</span></label>
      <p>Aquí debe ir la URL de SoundCloud</p>
      <textarea id="sc"></textarea>
    </div>
    <div class="acf">
      <label for="gr">Grabador</label>
      <p>Elija el usuario que grabó el sonido</p>
      <div class="select"><select id="gr"><option>- Select -</option></select></div>
    </div>
  </div>

  <aside class="secondary">
    <section class="box">
      <h2 class="box-title">Publish<span class="tri up"></span></h2>
      <div class="pub">
        <div class="split"><button type="button" class="btn">Save Draft</button><button type="button" class="btn">Preview</button></div>
        <ul class="pub-rows">
          <li><svg class="ic"><use href="#i-status"/></svg><span>Status: <b>Draft</b> <a href="#">Edit</a></span></li>
          <li><svg class="ic"><use href="#i-eye"/></svg><span>Visibility: <b>Public</b> <a href="#">Edit</a></span></li>
          <li><svg class="ic"><use href="#i-cal"/></svg><span>Publish <b>immediately</b> <a href="#">Edit</a></span></li>
        </ul>
      </div>
      <div class="pub-foot split"><a href="#" class="trash">Move to Trash</a><button type="button" class="btn primary-btn">Publish</button></div>
    </section>

    <section class="box">
      <h2 class="box-title">Types<span class="tri up"></span></h2>
      <div class="types">
        <div class="ttabs"><button type="button" class="ttab active">All Types</button><button type="button" class="ttab">Most Used</button></div>
        <div class="tpanel">
          <div class="tlist">
            <label><input type="checkbox">Entornos</label>
            <label class="child"><input type="checkbox">Cultural</label>
            <label><input type="checkbox">Estación</label>
            <label class="child"><input type="checkbox">Invierno</label>
            <label class="child"><input type="checkbox">Otoño</label>
            <label class="child"><input type="checkbox">Primavera</label>
            <label class="child"><input type="checkbox">Verano</label>
            <label><input type="checkbox">Fauna</label>
          </div>
          <div class="scroll" aria-hidden="true"><span class="arrow up"></span><span class="thumb"></span><span class="arrow down"></span></div>
        </div>
        <a href="#" class="addtype">+ Add New Type</a>
      </div>
    </section>

    <section class="box">
      <h2 class="box-title">Locations<span class="tri up"></span></h2>
      <div class="inside">
        <div class="addtag"><input type="text" aria-label="New location"><button type="button" class="btn">Add</button></div>
        <p class="howto">Separate tags with commas</p>
        <p><a href="#">Choose from the most used tags</a></p>
      </div>
    </section>

    <section class="box">
      <h2 class="box-title">Featured Image<span class="tri up"></span></h2>
      <div class="inside"><p><a href="#">Set featured image</a></p></div>
    </section>
  </aside>
  </div>
  <footer class="foot"><em>Thank you for creating with <a href="#">WordPress</a>.</em><span>Version 4.3.1</span></footer>
</main>
</div>
</body>
</html>
```

FILE: styles.css
```css
* { box-sizing: border-box; }
body { margin: 0; background: #f1f1f1; color: #444; font: 13px/19px "Open Sans", sans-serif; }
h1, h2, p, ul { margin: 0; padding: 0; }
ul { list-style: none; }
button, input, textarea, select { font: inherit; color: inherit; margin: 0; }
button { cursor: pointer; }
a { color: #0073aa; }
b { font-weight: 600; }
.sprite { position: absolute; }
.ic { width: 20px; height: 20px; fill: currentColor; flex: none; }

/* Admin bar */
.adminbar { display: flex; align-items: stretch; height: 32px; background: #23282d; padding-left: 7px; }
.ab { display: flex; align-items: center; color: #eee; text-decoration: none; margin-right: 14px; gap: 6px; }
.ab .ic { color: #a0a5aa; }
.ab-logo { margin-right: 15px; }
.ab-com { margin-right: 17px; }
.ab .dim { color: #a0a5aa; opacity: .7; }
.howdy { margin-left: auto; display: flex; align-items: center; gap: 6px; padding: 0 7px; background: #f7a1b8; border: 1px solid #e8b588; color: #1cb0e6; text-decoration: none; }
.avatar { width: 18px; height: 18px; }

.layout { display: flex; align-items: stretch; }

/* Sidebar */
.sidebar { width: 160px; flex: none; background: #23282d; color: #eee; }
.menu.first { padding-top: 12px; }
.menu.last { padding-bottom: 12px; }
.menu a, .collapse { display: flex; align-items: center; height: 34px; padding: 0 0 2px 8px; gap: 8px; color: #eee; font-size: 14px; text-decoration: none; }
.menu .ic { color: #a0a5aa; }
.menu .gap { margin-top: 11px; }
.menu .short { height: 22px; }
.menu .short.clipped { height: 25px; overflow: hidden; }
.current { position: relative; background: #0073aa; }
.menu .current a, .menu .current .ic { color: #fff; }
.current::after { content: ""; position: absolute; right: 0; top: 9px; border: 8px solid transparent; border-right-color: #f1f1f1; border-left: 0; }
.collapse { width: 100%; padding: 0 0 0 8px; gap: 6px; border: 0; background: none; font-size: 13px; color: #a0a5aa; }
.badge { width: 17px; height: 17px; border-radius: 9px; background: #d54e21; color: #fff; font-size: 9px; line-height: 17px; font-weight: 600; text-align: center; }
.menu a .badge { margin-left: -2px; }
.submenu { background: #32373c; padding: 7px 0 8px; }
.submenu.ruled { border-top: 4px solid #0073aa; }
.submenu a { display: block; line-height: 27px; padding-left: 12px; color: #b4b9be; text-decoration: none; }
.submenu .on { color: #fff; font-weight: 600; }

/* Content */
.content { flex: 1; min-width: 0; padding: 0 20px 0 22px; display: flex; flex-direction: column; }
.head { display: flex; justify-content: space-between; align-items: flex-start; height: 62px; }
h1 { padding-top: 17px; font-size: 23px; line-height: 32px; font-weight: 400; color: #23282d; }
.screen-options { height: 29px; width: 142px; display: flex; align-items: center; justify-content: center; gap: 8px; padding: 0; border: 1px solid #ddd; border-top: 0; background: #fff; color: #777; box-shadow: 0 1px 0 #ddd; }
.tri { width: 0; height: 0; border: 4px solid transparent; }
.tri.down { border-top: 7px solid #b4b9be; border-bottom: 0; }
.tri.up { border-bottom: 6px solid #a0a5aa; border-top: 0; }
.columns { display: grid; grid-template-columns: minmax(0, 1fr) 280px; gap: 20px; align-items: start; }
.secondary { display: grid; gap: 20px; }

input[type="text"], textarea, select { background: #fff; border: 1px solid #ddd; border-radius: 0; box-shadow: inset 0 1px 2px rgba(0, 0, 0, .07); }
.title-input { display: block; width: 100%; height: 38px; padding: 4px 9px 2px; font-size: 22px; }
.title-input::placeholder { color: #777; }

.btn { height: 28px; padding: 0 10px; border: 1px solid #ccc; border-radius: 3px; background: #f7f7f7; color: #555; line-height: 26px; box-shadow: inset 0 1px 0 #fff, 0 1px 0 rgba(0, 0, 0, .08); }
.primary-btn { height: 30px; padding: 0 13px; background: #00a0d2; border-color: #0073aa; color: #fff; box-shadow: inset 0 1px 0 rgba(120, 200, 230, .5), 0 1px 0 rgba(0, 0, 0, .15); }

.editor-tools { margin-top: 52px; height: 34px; display: flex; justify-content: space-between; align-items: flex-start; }
.media { display: flex; align-items: center; gap: 5px; padding: 0 7px; }
.media .ic { width: 18px; height: 18px; color: #82878c; }
.editor-tabs { display: flex; gap: 5px; padding-top: 6px; }
.etab { height: 28px; padding: 0 8px; border: 1px solid #e5e5e5; border-bottom: 0; background: #ebebeb; color: #777; }
.etab.active { height: 29px; background: #f5f5f5; color: #555; position: relative; }
.editor { border: 1px solid #e5e5e5; background: #fff; }
.toolbar { display: flex; justify-content: space-between; align-items: flex-start; padding: 5px; background: #f5f5f5; border-bottom: 1px solid #ddd; }
.quicktags { display: flex; flex-wrap: wrap; gap: 4px; flex: 1; padding-right: 12px; }
.tag { height: 26px; padding: 0 8px; border: 1px solid #ccc; border-radius: 3px; background: #f7f7f7; color: #555; font-size: 12px; line-height: 24px; box-shadow: inset 0 1px 0 #fff, 0 1px 0 rgba(0, 0, 0, .08); }
.tag.b { font-weight: 600; } .tag.i { font-style: italic; } .tag.u { text-decoration: underline; } .tag.s { text-decoration: line-through; }
.fullscreen { width: 28px; height: 26px; display: flex; align-items: center; justify-content: center; padding: 0; border: 0; background: none; color: #777; }
.editor-area { display: block; width: 100%; height: 320px; padding: 10px; border: 0; box-shadow: none; resize: none; }
.editor-status { height: 23px; padding: 0 10px; border-top: 1px solid #e5e5e5; background: #f7f7f7; font-size: 12px; line-height: 22px; }

.box { background: #fff; border: 1px solid #e5e5e5; box-shadow: 0 1px 1px rgba(0, 0, 0, .04); }
.box-title { display: flex; justify-content: space-between; align-items: center; height: 36px; padding: 0 14px 0 12px; border-bottom: 1px solid #eee; font-size: 14px; font-weight: 600; line-height: 20px; color: #23282d; }

.et { margin-top: 20px; }
.et-body { padding: 13px 12px 12px; }
.map { position: relative; width: 500px; max-width: 100%; height: 300px; margin: 13px 0 12px; overflow: hidden; font-family: Roboto, sans-serif; }
.map-art { display: block; width: 500px; height: 300px; }
.map-art text { text-anchor: middle; font-family: Roboto, sans-serif; paint-order: stroke; stroke: #fff; stroke-opacity: .7; stroke-width: 2px; fill: #333; }
.st { font-size: 9px; }
.country { font-size: 10px; font-weight: 500; }
.map-art .country text { fill: #222; }
.gulf { font-size: 9px; font-style: italic; }
.map-art .gulf text { fill: #4f6f9f; stroke-opacity: .3; }
.map-art .cuba { font-size: 9px; text-anchor: start; }
.map-art .glogo { font: 500 20px "Open Sans", sans-serif; text-anchor: start; stroke-width: 3px; }
.map-type { position: absolute; left: 10px; top: 10px; display: flex; background: #fff; border-radius: 2px; box-shadow: 0 1px 3px rgba(0, 0, 0, .3); }
.map-type button { height: 34px; padding: 0 8px 2px; border: 0; background: none; font-size: 11px; color: #565656; }
.map-type .on { color: #000; font-weight: 500; border-right: 1px solid #e6e6e6; }
.map-controls { position: absolute; right: 10px; bottom: 24px; display: grid; gap: 10px; }
.map-controls button { display: flex; align-items: center; justify-content: center; width: 28px; height: 28px; padding: 0; border: 0; background: #fff; }
.pegman, .zoomer { border-radius: 2px; box-shadow: 0 1px 3px rgba(0, 0, 0, .3); background: #fff; }
.map-controls .zoomer button { background: none; }
.zoomer button + button { border-top: 1px solid #e6e6e6; }
.map-legal { position: absolute; right: 0; bottom: 0; height: 14px; display: flex; gap: 12px; padding: 0 6px 0 5px; background: rgba(245, 245, 245, .7); font-size: 10px; line-height: 14px; color: #444; white-space: nowrap; }
.map-legal a { color: #444; text-decoration: none; }

.fields { display: grid; gap: 14px; margin-top: 13px; }
.field-row { display: flex; align-items: flex-end; }
.field-row label { width: 154px; line-height: 23px; }
.field-row input { width: 350px; height: 27px; }
.field-row a { margin-left: 6px; font-size: 11px; line-height: 24px; }
.hint { height: 20px; display: flex; gap: 4px; font-size: 11px; line-height: 21px; color: #666; }
.hint code { padding: 2px 5px 0; background: #ededed; color: #444; font: 12px/18px "Liberation Mono", monospace; }
.rating-label { margin-top: 14px; }
.rating { display: flex; gap: 1px; margin-top: 8px; }
.rating button { width: 16px; height: 16px; padding: 0; border: 0; background: none; }
.rating svg { display: block; width: 16px; height: 16px; }

.acf { display: grid; margin-top: 34px; }
.acf label { font-weight: 600; line-height: 22px; }
.acf p { font-size: 12px; line-height: 20px; color: #777; margin-bottom: 11px; }
.acf textarea { width: 100%; height: 164px; }
.acf .req { color: #d00; }
.select { position: relative; }
.select::after { content: ""; position: absolute; right: 6px; top: 11px; border: 3px solid transparent; border-top: 6px solid #000; border-bottom: 0; }
.select select { width: 100%; height: 28px; padding: 0 7px; appearance: none; font-size: 14px; color: #32373c; }

/* Publish */
.pub { padding: 10px 10px 2px; }
.split { display: flex; justify-content: space-between; align-items: center; }
.pub-rows { margin-top: 4px; }
.pub-rows li { display: flex; align-items: center; gap: 7px; height: 34px; }
.pub-rows .ic { width: 18px; height: 18px; color: #82878c; }
.pub-foot { padding: 10px 10px 10px 12px; border-top: 1px solid #ddd; background: #f5f5f5; }
.trash { color: #a00; text-decoration: none; }

/* Types */
.types { padding: 8px 12px 29px; }
.ttabs { display: flex; }
.ttab { height: 27px; padding: 0 10px; border: 0; background: none; color: #0073aa; }
.ttab.active { height: 28px; margin-bottom: -1px; padding: 0 5px 1px; border: 1px solid #ddd; border-bottom: 0; background: #fdfdfd; color: #32373c; position: relative; }
.tpanel { display: flex; height: 202px; border: 1px solid #ddd; background: #fdfdfd; overflow: hidden; }
.tlist { flex: 1; padding: 14px 12px 0; overflow: hidden; }
.tlist label { display: flex; align-items: center; gap: 7px; height: 24px; }
.tlist .child { padding-left: 18px; }
.tlist input { appearance: none; width: 16px; height: 16px; margin: 0; border: 1px solid #b4b9be; background: #fff; box-shadow: inset 0 1px 2px rgba(0, 0, 0, .1); }
.scroll { width: 17px; display: flex; flex-direction: column; align-items: center; padding: 7px 0; background: #f1f1f1; }
.arrow { border: 4px solid transparent; }
.arrow.up { border-top: 0; border-bottom-color: #a3a3a3; }
.arrow.down { border-bottom: 0; border-top-color: #505050; margin-top: auto; }
.thumb { width: 13px; height: 43px; margin-top: 6px; background: #bcbcbc; border: 1px solid #a8a8a8; }
.addtype { display: inline-block; margin-top: 17px; font-weight: 600; }

.inside { padding: 13px 12px; }
.addtag { display: flex; gap: 4px; margin-bottom: 13px; }
.addtag input { width: 180px; height: 28px; }
.howto { margin-bottom: 19px; font-style: italic; color: #666; }

.foot { display: flex; justify-content: space-between; margin: auto 0 0 -2px; padding-bottom: 10px; color: #777; }
.foot a { text-decoration: none; }
```
